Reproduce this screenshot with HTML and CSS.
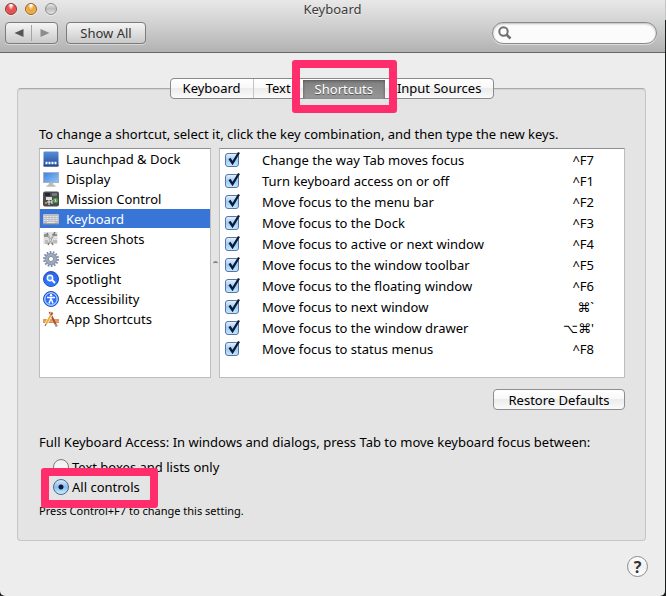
FILE: index.html
```html
<!DOCTYPE html>
<html lang="en">
<head>
<meta charset="utf-8">
<title>Keyboard</title>
<link rel="stylesheet" href="styles.css">
</head>
<body>
<svg class="defs" width="0" height="0" aria-hidden="true">
  <defs>
    <linearGradient id="blue" x1="0" y1="0" x2="0" y2="1"><stop offset="0" stop-color="#5b8fd8"/><stop offset="1" stop-color="#1d4a9c"/></linearGradient>
    <linearGradient id="screen" x1="0" y1="0" x2="1" y2="1"><stop offset="0" stop-color="#3f83dd"/><stop offset="1" stop-color="#8fc4f8"/></linearGradient>
    <linearGradient id="orb" x1="0" y1="0" x2="0" y2="1"><stop offset="0" stop-color="#2a62e4"/><stop offset="1" stop-color="#2f7bff"/></linearGradient>
    <symbol id="check" viewBox="0 0 16 16"><path d="M4.5 7.5l3 4.5L14 1.5" fill="none" stroke="#0b1a38" stroke-width="2.3"/></symbol>
  </defs>
</svg>
<main class="window">
  <header class="titlebar">
    <div class="title-row">
      <div class="lights">
        <button class="light red" aria-label="Close"></button>
        <button class="light amber" aria-label="Minimize"></button>
        <button class="light grey" aria-label="Zoom" disabled></button>
      </div>
      <h1>Keyboard</h1>
    </div>
    <div class="toolbar">
      <div class="nav-pair">
        <button aria-label="Back"><svg width="10" height="8" viewBox="0 0 10 8"><path d="M9.5 0v8L0.500 4z" fill="#555"/></svg></button>
        <button aria-label="Forward"><svg width="10" height="8" viewBox="0 0 10 8"><path d="M.5 0v8l9-4z" fill="#8c8c8c"/></svg></button>
      </div>
      <button class="bar-button">Show All</button>
      <label class="search">
        <svg width="14" height="14" viewBox="0 0 14 14" aria-hidden="true"><circle cx="5.500" cy="5.500" r="4.200" fill="none" stroke="#707070" stroke-width="2"/><path d="M8.500 8.500l4 4" stroke="#707070" stroke-width="2.600"/></svg>
        <input type="search" aria-label="Search">
      </label>
    </div>
  </header>

  <section class="group">
    <div class="tabs" role="tablist">
      <button role="tab">Keyboard</button>
      <button role="tab">Text</button>
      <div class="marked tab-mark"><button role="tab" class="active" aria-selected="true">Shortcuts</button></div>
      <button role="tab">Input Sources</button>
    </div>

    <p class="intro">To change a shortcut, select it, click the key combination, and then type the new keys.</p>

    <div class="lists">
      <ul class="categories">
        <li><button><svg viewBox="0 0 16 16"><rect x=".5" y=".5" width="15" height="15" rx="1" fill="url(#blue)"/><path d="M.5 14h15v1.500H.5z" fill="#2a4d85"/><path d="M2.500 12h2M5.500 12h2M8.500 12h2M11.500 12h2" stroke="#fff" stroke-width="2.400"/></svg>Launchpad &amp; Dock</button></li>
        <li><button><svg viewBox="0 0 16 16"><path d="M6 12h4l1 2.500H5z" fill="#bbb"/><path d="M3.500 15h9" stroke="#999"/><rect x="0" y="1" width="16" height="11" fill="#a9b4c2"/><rect x="1" y="2" width="14" height="9" fill="url(#screen)"/></svg>Display</button></li>
        <li><button><svg viewBox="0 0 16 16"><rect width="16" height="15" y=".5" rx="2" fill="#4b4c50"/><rect x="2" y="2" width="5" height="3" fill="#25282c"/><rect x="9" y="2" width="5" height="3" fill="#777"/><rect x="3" y="6" width="6" height="3" fill="#ddd"/><rect x="10" y="7" width="5" height="5" rx="2" fill="#54a345"/><path d="M6 8v6M4 11h5M9 9v4" stroke="#eee"/><path d="M2 12h2" stroke="#cf8d36" stroke-width="2"/><path d="M12 8l1 3" stroke="#c7e6c0"/></svg>Mission Control</button></li>
        <li><button class="selected" aria-current="true"><svg viewBox="0 0 16 16"><rect y="3" width="16" height="10" rx="1" fill="#b9bcc2"/><path d="M1 5.500h14M1 7.500h14M1 9.500h14" stroke="#e8e8ea" stroke-dasharray="1 .5"/><path d="M4 11.500h8" stroke="#e8e8ea"/><path d="M0 13h16" stroke="#8b8f98"/></svg>Keyboard</button></li>
        <li><button><svg viewBox="0 0 16 16"><rect x=".5" y="1" width="14" height="12" fill="#dedede"/><path d="M1 3h4v3H1zM9 3h5v2H9z" fill="#8e928e"/><path d="M2 9h3v4H2zM10 9h4v3h-4z" fill="#bcbcbc"/><path d="M4 2l6 12M12 1L5 14" stroke="#777" stroke-width="1.500"/><path d="M5 4l4 8M10 4l-4 8" stroke="#fff" stroke-width=".6"/></svg>Screen Shots</button></li>
        <li><button><svg viewBox="0 0 16 16"><circle cx="8" cy="8" r="7" fill="none" stroke="#7d8aa3" stroke-width="2" stroke-dasharray="1.700 1.442"/><circle cx="8" cy="8" r="4.500" fill="none" stroke="#8d9ab3" stroke-width="3.600"/><circle cx="8" cy="8" r="4.200" fill="none" stroke="#aeb8ca" stroke-width="1"/><circle cx="8" cy="8" r="2.600" fill="#fff" stroke="#66738d" stroke-width=".8"/></svg>Services</button></li>
        <li><button><svg viewBox="0 0 16 16"><circle cx="8" cy="8" r="7.500" fill="url(#orb)" stroke="#2454c4"/><circle cx="7" cy="7" r="2.700" fill="#5d9bff" stroke="#fff" stroke-width="1.400"/><path d="M9 9l3 3" stroke="#fff" stroke-width="2"/></svg>Spotlight</button></li>
        <li><button><svg viewBox="0 0 16 16"><circle cx="8" cy="8" r="7.500" fill="url(#orb)" stroke="#2454c4"/><circle cx="8" cy="8" r="6.200" fill="none" stroke="#e5efff"/><circle cx="8" cy="4.300" r="1.200" fill="#fff"/><path d="M4 6.500h8M8 6v3.500M7.500 8.500L6 12.500M8.500 8.500l1.500 4" stroke="#fff" stroke-width="1.500" fill="none"/></svg>Accessibility</button></li>
        <li><button><svg viewBox="0 0 16 16"><path d="M0 8h16v4H0z" fill="#e6a66c"/><path d="M0 9h16M0 11.500h16" stroke="#c98347" stroke-width=".6"/><path d="M6.500 1l7 14" stroke="#b04b3a" stroke-width="1.800"/><path d="M9 2L2.500 14" stroke="#fff" stroke-width="2.800"/><path d="M9 2L3 13" stroke="#e8b02c" stroke-width="1.800"/><path d="M3 13l-1 2" stroke="#555"/><path d="M9.500 1.500L8 4" stroke="#b4533f" stroke-width="2"/><path d="M12.500 13l1.500 2.500" stroke="#999" stroke-width="2"/></svg>App Shortcuts</button></li>
      </ul>
      <div class="splitter" aria-hidden="true"></div>
      <div class="shortcuts">
        <table>
          <tbody>
            <tr><td><span class="tick"><input type="checkbox" id="s0" checked><svg><use href="#check"/></svg></span></td><td><label for="s0">Change the way Tab moves focus</label></td><td>^F7</td></tr>
            <tr><td><span class="tick"><input type="checkbox" id="s1" checked><svg><use href="#check"/></svg></span></td><td><label for="s1">Turn keyboard access on or off</label></td><td>^F1</td></tr>
            <tr><td><span class="tick"><input type="checkbox" id="s2" checked><svg><use href="#check"/></svg></span></td><td><label for="s2">Move focus to the menu bar</label></td><td>^F2</td></tr>
            <tr><td><span class="tick"><input type="checkbox" id="s3" checked><svg><use href="#check"/></svg></span></td><td><label for="s3">Move focus to the Dock</label></td><td>^F3</td></tr>
            <tr><td><span class="tick"><input type="checkbox" id="s4" checked><svg><use href="#check"/></svg></span></td><td><label for="s4">Move focus to active or next window</label></td><td>^F4</td></tr>
            <tr><td><span class="tick"><input type="checkbox" id="s5" checked><svg><use href="#check"/></svg></span></td><td><label for="s5">Move focus to the window toolbar</label></td><td>^F5</td></tr>
            <tr><td><span class="tick"><input type="checkbox" id="s6" checked><svg><use href="#check"/></svg></span></td><td><label for="s6">Move focus to the floating window</label></td><td>^F6</td></tr>
            <tr><td><span class="tick"><input type="checkbox" id="s7" checked><svg><use href="#check"/></svg></span></td><td><label for="s7">Move focus to next window</label></td><td>⌘`</td></tr>
            <tr><td><span class="tick"><input type="checkbox" id="s8" checked><svg><use href="#check"/></svg></span></td><td><label for="s8">Move focus to the window drawer</label></td><td>⌥⌘'</td></tr>
            <tr><td><span class="tick"><input type="checkbox" id="s9" checked><svg><use href="#check"/></svg></span></td><td><label for="s9">Move focus to status menus</label></td><td>^F8</td></tr>
          </tbody>
        </table>
      </div>
    </div>

    <div class="actions"><button class="push">Restore Defaults</button></div>

    <fieldset class="access">
      <legend>Full Keyboard Access: In windows and dialogs, press Tab to move keyboard focus between:</legend>
      <label class="option"><input type="radio" name="access">Text boxes and lists only</label>
      <label class="option marked option-mark"><input type="radio" name="access" checked>All controls</label>
      <p class="hint">Press Control+F7 to change this setting.</p>
    </fieldset>
  </section>

  <footer><button class="help" aria-label="Help">?</button></footer>
</main>
</body>
</html>
```
FILE: styles.css
```css
* { box-sizing: border-box; }

body {
  margin: 0;
  background: linear-gradient(#c4c4c4 20px, #1c1d1d 20px);
  font: 13px/20px "Noto Sans", "Open Sans", "DejaVu Sans", sans-serif;
  color: #000;
}

button, input { font: inherit; color: inherit; margin: 0; padding: 0; }
h1, p, ul, fieldset, legend { margin: 0; padding: 0; border: 0; font-size: 13px; font-weight: 400; }
ul { list-style: none; }
.defs { position: absolute; }

.window {
  min-height: 100vh;
  margin-right: 1px;
  display: flex;
  flex-direction: column;
  background: #ededed;
  border-radius: 0 0 5px 5px;
}

/* Title bar */
.titlebar {
  height: 53px;
  background: linear-gradient(#e8e8e8, #cfcfcf 50%, #b2b2b2);
  border-bottom: 1px solid #686868;
}
.title-row {
  display: grid;
  grid-template-columns: 1fr auto 1fr;
  height: 22px;
}
.title-row h1 { line-height: 18px; color: #3c3c3c; text-shadow: 0 1px #f0f0f0; }
.lights { display: flex; gap: 8px; padding: 3px 5px; }
.light {
  width: 12px;
  height: 12px;
  border: 1px solid #777;
  border-radius: 50%;
  box-shadow: 0 1px #eee;
}
.red { border-color: #8a3530; background: radial-gradient(ellipse at 50% 0, #fff 0 12%, #e4504d 45%, #ee5450 70%, #ff9f98); }
.amber { border-color: #94642a; background: radial-gradient(ellipse at 50% 0, #fff 0 12%, #e8a437 45%, #f3b347 70%, #ffec96); }
.grey { border-color: #8b8b8b; background: linear-gradient(#e8e8e8, #bcbcbc 45%, #e3e3e3); }

.toolbar { display: flex; gap: 8px; padding: 0 8px 0 5px; }
.nav-pair, .bar-button {
  height: 22px;
  border: 1px solid #7b7b7b;
  border-radius: 4px;
  background: linear-gradient(#f5f5f5, #c9c9c9);
  box-shadow: 0 1px #d8d8d8;
}
.nav-pair { display: flex; width: 53px; padding: 2px 0; }
.nav-pair button {
  flex: 1;
  display: flex;
  align-items: center;
  justify-content: center;
  border: 0;
  background: none;
}
.nav-pair button + button { border-left: 1px solid #a5a5a5; }
.bar-button { width: 80px; line-height: 18px; color: #333; }
.search {
  display: flex;
  align-items: center;
  width: 165px;
  height: 22px;
  margin-left: auto;
  padding: 0 5px;
  border: 1px solid #8a8a8a;
  border-radius: 11px;
  background: #fbfbfb;
  box-shadow: inset 0 1px 2px #bbb, 0 1px #ddd;
}
.search input { flex: 1; min-width: 0; border: 0; outline: 0; background: none; }

/* Group box */
.group {
  margin: 35px 19px 0 17px;
  padding: 0 20px 19px 21px;
  border: 1px solid #c6c6c6;
  border-top-color: #a9a9a9;
  border-radius: 4px;
  background: #e4e4e4;
  box-shadow: inset 0 1px 1px #d4d4d4;
}

.tabs {
  display: flex;
  width: fit-content;
  height: 21px;
  margin: -11px auto 25px;
  border: 1px solid #8a8a8a;
  border-radius: 4px;
  background: linear-gradient(#fff, #f8f8f8 50%, #ececec 50%, #fafafa);
}
.tabs button {
  height: 19px;
  padding: 0 12px;
  border: 0;
  background: none;
  line-height: 19px;
}
.tabs > button + button { border-left: 1px solid #c4c4c4; }
.tabs .active {
  background: linear-gradient(#808080, #989898);
  box-shadow: inset 0 1px 3px #555;
  color: #fff;
  text-shadow: 0 1px #555;
}

/* Highlight frames around a control */
.marked { position: relative; }
.marked::after {
  content: "";
  position: absolute;
  border: 8px solid #ff2d6c;
  border-radius: 3px;
  pointer-events: none;
}
.tab-mark::after { inset: -19px -12px -15px -11px; }
.option-mark::after { inset: -9px -18px -11px -12px; }

/* Lists */
.lists {
  display: grid;
  grid-template-columns: 172px 8px 1fr;
  height: 230px;
  margin-top: 4px;
  margin-bottom: 11px;
}
.categories, .shortcuts { border: 1px solid #bdbdbd; border-top-color: #8e8e8e; background: #fff; }
.categories button {
  display: flex;
  align-items: center;
  gap: 7px;
  width: 100%;
  height: 20px;
  padding: 0 3px;
  border: 0;
  border-bottom: 1px solid #fff;
  background: none;
  text-align: left;
}
.categories svg { width: 16px; height: 16px; }
.categories .selected { background: #3875d7; color: #fff; }
.splitter { align-self: center; width: 5px; height: 5px; border-radius: 50%; border-top: 2px solid #888; justify-self: center; }

.shortcuts table { width: 100%; border-collapse: collapse; }
.shortcuts td { height: 21px; padding: 0; line-height: 20px; vertical-align: middle; }
.shortcuts td:first-child { width: 42px; padding-left: 5px; }
.shortcuts td:last-child { width: 80px; padding-right: 30px; text-align: right; }
.tick { position: relative; display: block; width: 14px; height: 14px; }
.tick input {
  display: block;
  appearance: none;
  width: 14px;
  height: 14px;
  border: 1px solid #5c73a5;
  border-radius: 3px;
  background: linear-gradient(#e2f0fc, #9dccf4 50%, #bfe7ff);
}
.tick svg { position: absolute; left: 0; top: -2px; width: 16px; height: 16px; pointer-events: none; }
.tick input:not(:checked) + svg { display: none; }

.actions { display: flex; justify-content: flex-end; margin-bottom: 22px; }
.push {
  width: 132px;
  height: 21px;
  border: 1px solid #8d8d8d;
  border-radius: 4px;
  background: linear-gradient(#fff, #f8f8f8 50%, #ececec 50%, #fafafa);
  line-height: 18px;
}

/* Keyboard access */
.access { display: flex; flex-direction: column; align-items: flex-start; min-width: 0; }
.access legend { padding-bottom: 5px; }
.option { display: flex; align-items: center; gap: 3px; height: 20px; margin-left: 14px; }
.option input {
  appearance: none;
  width: 16px;
  height: 16px;
  border: 1px solid #7e7e7e;
  border-radius: 50%;
  background: linear-gradient(#eee, #fff);
}
.option input:checked {
  border-color: #4f668f;
  background: radial-gradient(circle, #0c1a34 0 2px, transparent 3px), linear-gradient(#d8e9fa, #86bdf0 50%, #c6f0ff);
}
.hint { margin-top: 4px; font-size: 11px; }

footer { display: flex; justify-content: flex-end; padding: 15px 17px 0 0; }
.help {
  width: 21px;
  height: 21px;
  border: 1px solid #8b8b8b;
  border-radius: 50%;
  background: linear-gradient(#fff, #f0f0f0 50%, #fff);
  font-size: 16px;
  font-weight: 700;
  line-height: 18px;
  color: #333;
}
```
